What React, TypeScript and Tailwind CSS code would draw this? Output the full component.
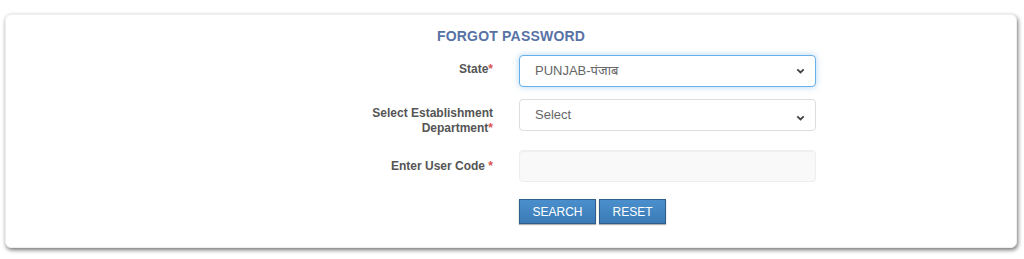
import React, { useState } from "react"

function Chevron() {
    return (
        <svg
            className="pointer-events-none absolute top-1/2 right-[11px] -translate-y-1/2"
            width="9"
            height="7"
            viewBox="0 0 9 7"
        >
            <path d="M1.3 1.8 4.5 5 7.7 1.8" fill="none" stroke="#444" strokeWidth="1.8" />
        </svg>
    )
}

function Label({ children }: { children: React.ReactNode }) {
    return (
        <div className="w-[487px] pt-[7px] text-right text-[12px] leading-[15px] font-bold text-[#555]">
            {children}
            <span className="text-[#d9534f]">*</span>
        </div>
    )
}

export default function App() {
    const [state, setState] = useState("PB")
    const [dept, setDept] = useState("")
    const [code, setCode] = useState("")

    const selectBase =
        "h-[32px] w-[297px] appearance-none rounded-[4px] border bg-white pl-[15px] text-[13px] text-[#666] outline-none"

    return (
        <div className="min-h-[259px] bg-white pt-[14px] pr-[7px] pl-[5px] font-['Liberation_Sans','Noto_Sans',Arial,sans-serif]">
            <div className="h-[234px] rounded-[6px] border border-[#eee] bg-white pt-[11px] shadow-[1px_2px_4px_rgba(0,0,0,0.55)]">
                <h2 className="text-center text-[14px] leading-[20px] font-bold tracking-[0.2px] text-[#5872a6]">
                    FORGOT PASSWORD
                </h2>

                <div className="mt-[9px] flex gap-[26px]">
                    <Label>State</Label>
                    <div className="relative">
                        <select
                            value={state}
                            onChange={(e) => setState(e.target.value)}
                            className={`${selectBase} border-[#66afe9] shadow-[0_0_6px_rgba(102,175,233,0.5)]`}
                        >
                            <option value="PB">PUNJAB-पंजाब</option>
                        </select>
                        <Chevron />
                    </div>
                </div>

                <div className="mt-[12px] flex gap-[26px]">
                    <Label>
                        Select Establishment
                        <br />
                        Department
                    </Label>
                    <div className="relative">
                        <select
                            value={dept}
                            onChange={(e) => setDept(e.target.value)}
                            className={`${selectBase} border-[#ddd]`}
                        >
                            <option value="">Select</option>
                        </select>
                        <Chevron />
                    </div>
                </div>

                <div className="mt-[14px] flex gap-[26px]">
                    <div className="w-[487px] pt-[9px] text-right text-[12px] leading-[15px] font-bold text-[#555]">
                        Enter User Code <span className="text-[#d9534f]">*</span>
                    </div>
                    <input
                        value={code}
                        onChange={(e) => setCode(e.target.value)}
                        className="h-[32px] w-[297px] rounded-[4px] border border-[#eee] bg-[#f9f9f9] px-[12px] text-[13px] text-[#555] shadow-[inset_0_1px_1px_rgba(0,0,0,0.04)] outline-none"
                    />
                </div>

                <div className="mt-[17px] flex gap-[3px] pl-[513px]">
                    <button className="h-[25px] w-[77px] border border-[#2e5d89] bg-gradient-to-b from-[#4a8fcc] to-[#3a7bb7] text-[12px] text-white shadow-[0_1px_1px_rgba(0,0,0,0.3)]">
                        SEARCH
                    </button>
                    <button className="h-[25px] w-[67px] border border-[#2e5d89] bg-gradient-to-b from-[#4a8fcc] to-[#3a7bb7] text-[12px] text-white shadow-[0_1px_1px_rgba(0,0,0,0.3)]">
                        RESET
                    </button>
                </div>
            </div>
        </div>
    )
}
